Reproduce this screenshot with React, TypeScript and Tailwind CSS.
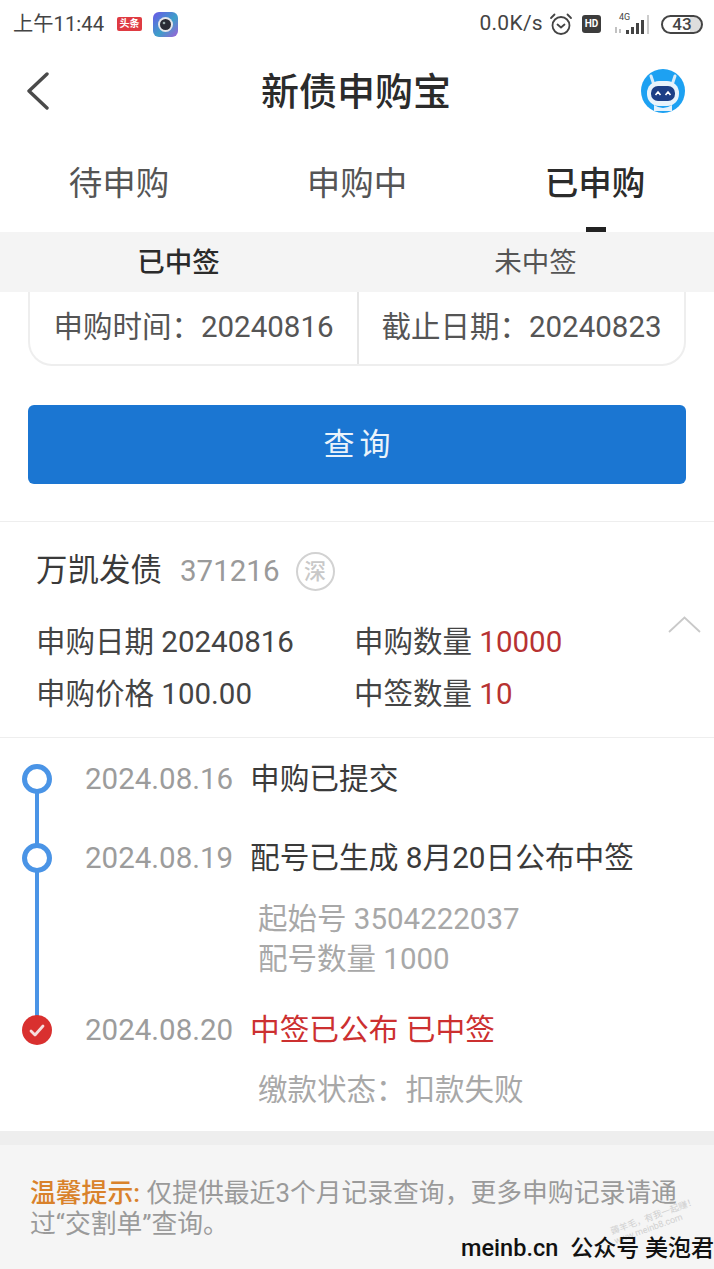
const cjk = "font-['Roboto','Noto_Sans_CJK_SC',sans-serif]";

function StatusBar() {
  return (
    <div className="flex h-[48px] items-center justify-between pl-[13px] pr-[11px] text-[21px] text-[#444]">
      <div className="flex items-center">
        <span className="pt-[1px] text-[20.3px]">上午11:44</span>
        <span className="ml-[13px] flex h-[14px] w-[25px] items-center justify-center rounded-[2px] bg-[#df3b42] text-[10px] leading-none font-bold text-white">头条</span>
        <svg className="ml-[11px]" width="25" height="25" viewBox="0 0 25 25">
          <defs>
            <linearGradient id="cam" x1="0" y1="0" x2="1" y2="1">
              <stop offset="0" stopColor="#6a55e8" />
              <stop offset="0.55" stopColor="#3d9fc9" />
              <stop offset="1" stopColor="#a05ed8" />
            </linearGradient>
          </defs>
          <rect width="25" height="25" rx="6" fill="url(#cam)" />
          <circle cx="12.5" cy="12.5" r="7.5" fill="#e6e6ea" />
          <circle cx="12.5" cy="12.5" r="5.5" fill="#2b2b35" />
          <circle cx="11" cy="11" r="1.3" fill="#9aa" />
        </svg>
      </div>
      <div className="flex items-center">
        <span className="tracking-[0.3px]">0.0K/s</span>
        <svg className="ml-[6px]" width="24" height="24" viewBox="0 0 24 24" fill="none" stroke="#444" strokeWidth="1.8" strokeLinecap="round" strokeLinejoin="round">
          <circle cx="12" cy="13.5" r="8.5" />
          <path d="M8.5 12.5l3.5 3 3.5-3" />
          <path d="M2 6l3.5-3.5M22 6l-3.5-3.5" />
        </svg>
        <span className="ml-[9px] flex h-[18px] w-[19px] items-center justify-center rounded-[3px] bg-[#3c3c3c] text-[10px] leading-none font-bold text-white">HD</span>
        <svg className="ml-[12px]" width="38" height="24" viewBox="0 0 38 24">
          <text x="6" y="8" fontSize="9" fill="#444">4G</text>
          <path d="M3 15v6M7 17v4" stroke="#999" strokeWidth="1.2" />
          <rect x="13" y="18" width="3" height="4" fill="#444" />
          <rect x="18" y="15" width="3" height="7" fill="#444" />
          <rect x="23" y="11" width="3" height="11" fill="#444" />
          <rect x="28" y="8" width="3" height="14" fill="#444" />
          <rect x="34" y="3" width="2" height="19" fill="#ccc" />
        </svg>
        <div className="ml-[10px] flex h-[19px] w-[42px] items-center justify-center overflow-hidden rounded-full border-2 border-[#444] bg-[linear-gradient(90deg,#fff_70%,#ddd_70%)] text-[17px] leading-none font-medium">43</div>
      </div>
    </div>
  );
}

function Header() {
  return (
    <div className="grid h-[86px] grid-cols-[1fr_auto_1fr] items-center pl-[26px] pr-[28px]">
      <svg width="24" height="38" viewBox="0 0 24 38" fill="none" stroke="#4a4a4a" strokeWidth="3.4" strokeLinecap="round" strokeLinejoin="round">
        <path d="M21 2L3 19l18 17" />
      </svg>
      <h1 className="pt-[2px] text-[38px] leading-none font-medium text-[#2b2b2b]">新债申购宝</h1>
      <svg className="justify-self-end" width="46" height="46" viewBox="0 0 46 46">
        <circle cx="23" cy="23" r="22" fill="#1da1f2" />
        <path d="M11 8l3 9M35 8l-3 9" stroke="#d8ecfa" strokeWidth="3" strokeLinecap="round" />
        <path d="M14 37q9 6 18 0v6H14z" fill="#e4f2fc" />
        <rect x="7" y="13" width="32" height="25" rx="12" fill="#e8f3fb" />
        <rect x="11" y="18" width="24" height="15" rx="7" fill="#1c3f86" />
        <path d="M15.5 27l2.5-3 2.5 3M25.5 27l2.5-3 2.5 3" stroke="#fff" strokeWidth="1.6" fill="none" />
      </svg>
    </div>
  );
}

function Tabs() {
  return (
    <div className="grid h-[98px] grid-cols-3 text-[33.5px] leading-none">
      <div className="flex items-start justify-center pt-[33px] text-[#555]">待申购</div>
      <div className="flex items-start justify-center pt-[33px] text-[#555]">申购中</div>
      <div className="relative flex items-start justify-center pt-[33px] font-medium text-[#2b2b2b]">
        已申购
        <span className="absolute bottom-0 left-[110px] h-[5px] w-[20px] bg-[#222]" />
      </div>
    </div>
  );
}

function SubTabs() {
  return (
    <div className="grid h-[60px] grid-cols-2 bg-[#f4f4f4] text-[27.5px]">
      <div className="flex items-center justify-center pt-[1px] font-medium text-[#2b2b2b]">已中签</div>
      <div className="flex items-center justify-center pt-[1px] text-[#555]">未中签</div>
    </div>
  );
}

function DateCard() {
  return (
    <div className="mx-[28px] grid h-[74px] grid-cols-2 rounded-b-[24px] border-x-2 border-b-2 border-[#eeeeee] text-[29.5px] text-[#555]">
      <div className="flex items-center justify-center pb-[2px]">申购时间：20240816</div>
      <div className="flex items-center justify-center border-l-2 border-[#e6e6e6] pb-[2px]">截止日期：20240823</div>
    </div>
  );
}

function Detail() {
  return (
    <section className="mt-[37px] border-y border-[#eeeeee] pt-[27px] pl-[36px] pb-[24px]">
      <div className="flex h-[44px] items-center">
        <span className="text-[31.5px] text-[#3a3a3a]">万凯发债</span>
        <span className="ml-[18px] text-[29.5px] text-[#9a9a9a]">371216</span>
        <span className="ml-[16px] flex h-[39px] w-[39px] items-center justify-center rounded-full border-2 border-[#d2d2d2] text-[22px] font-medium text-[#c8c8c8]">深</span>
      </div>
      <div className="relative mt-[30px] grid grid-cols-[318px_1fr] gap-y-[14px] text-[29.5px] leading-[38px] text-[#444]">
        <span>申购日期 20240816</span>
        <span>申购数量 <span className="text-[#b73232]">10000</span></span>
        <span>申购价格 100.00</span>
        <span>中签数量 <span className="text-[#b73232]">10</span></span>
        <svg className="absolute top-[-7px] right-[13px]" width="33" height="17" viewBox="0 0 33 17" fill="none" stroke="#c9c9c9" strokeWidth="1.8">
          <path d="M1 16L16.5 1.5 32 16" />
        </svg>
      </div>
    </section>
  );
}

function Dot({ done }: { done?: boolean }) {
  if (done) {
    return (
      <span className="relative z-10 flex h-[30px] w-[30px] items-center justify-center rounded-full bg-[#d9302f]">
        <svg width="16" height="13" viewBox="0 0 16 13" fill="none" stroke="#f6dede" strokeWidth="2.8" strokeLinecap="round" strokeLinejoin="round">
          <path d="M2 7l4 4 8-9" />
        </svg>
      </span>
    );
  }
  return <span className="relative z-10 h-[30px] w-[30px] rounded-full border-[5px] border-[#4a94e6] bg-white" />;
}

function TimelineRow({ date, text, done }: { date: string; text: string; done?: boolean }) {
  return (
    <div className="flex h-[40px] items-center text-[29.5px]">
      <div className="flex w-[74px] justify-center">
        <Dot done={done} />
      </div>
      <span className="ml-[11px] w-[165px] text-[#9c9c9c]">{date}</span>
      <span className={done ? "text-[29.7px] text-[#cc3030]" : "text-[29.7px] text-[#3a3a3a]"}>{text}</span>
    </div>
  );
}

function Timeline() {
  return (
    <section className="relative pt-[21px] pb-[21px]">
      <span className="absolute top-[41px] left-[35px] h-[250px] w-[4px] bg-[#4a94e6]" />
      <TimelineRow date="2024.08.16" text="申购已提交" />
      <div className="mt-[39px]">
        <TimelineRow date="2024.08.19" text="配号已生成 8月20日公布中签" />
      </div>
      <div className="mt-[21px] pl-[258px] text-[29.5px] leading-[40px] text-[#a8a8a8]">
        <div>起始号 3504222037</div>
        <div>配号数量 1000</div>
      </div>
      <div className="mt-[31px]">
        <TimelineRow date="2024.08.20" text="中签已公布 已中签" done />
      </div>
      <div className="mt-[21px] pl-[258px] text-[29.5px] leading-[39px] text-[#a8a8a8]">缴款状态：扣款失败</div>
    </section>
  );
}

export default function App() {
  return (
    <div className={`${cjk} relative h-[1269px] w-[714px] overflow-hidden bg-white`}>
      <StatusBar />
      <Header />
      <Tabs />
      <SubTabs />
      <DateCard />
      <button className="mx-[28px] mt-[39px] flex h-[79px] w-[658px] items-center justify-center rounded-[6px] bg-[#1b76d2] pt-[1px] pl-[5px] text-[31px] tracking-[5px] text-[#eaf3fb]">查询</button>
      <Detail />
      <Timeline />
      <div className="h-[14px] bg-[#eeeeee]" />
      <div className="h-[124px] bg-[#f5f5f5] px-[30px] pt-[33px] text-[25.8px] leading-[31px] text-[#9a9a9a]">
        <span className="font-medium text-[#d9822b]">温馨提示:</span> 仅提供最近3个月记录查询，更多申购记录请通过“交割单”查询。
      </div>
      <div className="absolute right-[14px] bottom-[38px] -rotate-[20deg] text-[9px] leading-[10px] text-[#d0d0d0]">
        <div>薅羊毛，有我一起赚！</div>
        <div>www.meinb8.com</div>
      </div>
      <div className="absolute right-0 bottom-[4px] text-[23px] leading-[32px] font-medium text-[#111]">
        <span className="text-[23.5px]">meinb.cn</span><span className="ml-[12px]">公众号 美泡君</span>
      </div>
    </div>
  );
}
